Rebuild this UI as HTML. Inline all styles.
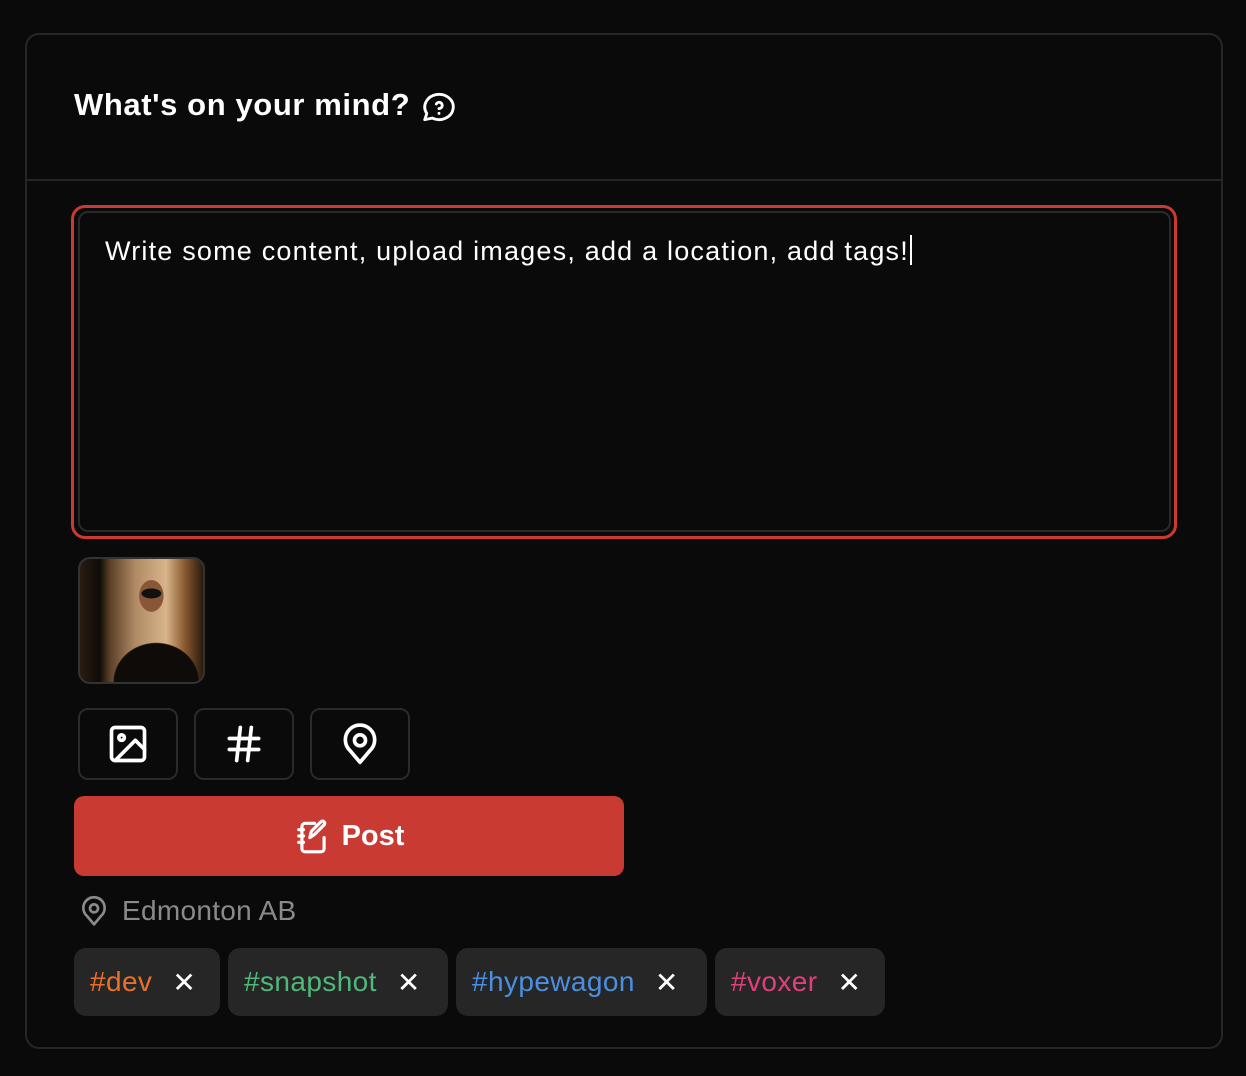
<!DOCTYPE html>
<html><head><meta charset="utf-8"><style>
*{box-sizing:border-box;margin:0;padding:0}
body{width:1246px;height:1076px;background:#0a0a0a;font-family:"Liberation Sans",sans-serif;color:#fff;position:relative;overflow:hidden}
.card{position:absolute;left:25px;top:33px;width:1198px;height:1016px;border:2px solid #262626;border-radius:14px}
.hdr{position:absolute;left:0;top:0;right:0;height:146px;border-bottom:2px solid #262626}
.title{font-size:31px;font-weight:bold;letter-spacing:0.6px}
.ring{position:absolute;left:71px;top:205px;width:1106px;height:334px;border:3px solid #c93a32;border-radius:14px}
.ta{position:absolute;left:78px;top:211px;width:1093px;height:321px;border:2px solid #2a2a2a;border-radius:10px}
.ta span{position:absolute;left:25px;top:22px;font-size:27px;color:#fff;letter-spacing:1.2px;white-space:nowrap}
.cursor{display:inline-block;width:2px;height:30px;background:#fff;vertical-align:-5px;margin-left:1px}
.photo{position:absolute;left:78px;top:557px;width:127px;height:127px;border-radius:12px;border:2px solid #333;overflow:hidden;
background:radial-gradient(ellipse 16px 8px at 58% 28%,#111 60%,transparent 64%),
radial-gradient(ellipse 20px 26px at 58% 30%,#8a5638 60%,transparent 62%),
radial-gradient(ellipse 60px 55px at 62% 100%,#0e0b09 70%,transparent 72%),
linear-gradient(90deg,#2a1c12 0%,#0f0b08 16%,#5a3e26 24%,#b08a64 45%,#d8b48a 70%,#8a5a30 85%,#2a1a0e 100%)}
.btn{position:absolute;top:708px;width:100px;height:72px;border:2px solid #2a2a2a;border-radius:10px;display:flex;align-items:center;justify-content:center}
.post{position:absolute;left:74px;top:796px;width:550px;height:80px;background:#c93a32;border-radius:10px;display:flex;align-items:center;justify-content:center;font-size:29px;font-weight:bold;gap:10px}
.loc{position:absolute;left:78px;top:893px;display:flex;align-items:center;gap:12px;color:#8a8a8a;font-size:28px;letter-spacing:0.3px}
.tag{position:absolute;top:948px;height:68px;background:#262626;border-radius:12px;display:flex;align-items:center;padding-left:16px;font-size:28px;letter-spacing:0.4px}
.tag b{font-weight:normal;color:#fff;margin-left:20px;font-size:28px}
</style></head><body>
<div class="card"><div class="hdr"></div></div>
<div class="title" style="position:absolute;left:74px;top:87px">What's on your mind?</div>
<svg style="position:absolute;left:420px;top:88px" width="38" height="38" viewBox="0 0 24 24" fill="none" stroke="#fff" stroke-width="1.8" stroke-linecap="round" stroke-linejoin="round"><path d="M3 20l1.3-3.9A9 8 0 1 1 7.7 19L3 20"/><path d="M12 16v.01"/><path d="M12 13a2 2 0 0 0 .9-3.8 2 2 0 0 0-2.6.9"/></svg>
<div class="ring"></div>
<div class="ta"><span>Write some content, upload images, add a location, add tags!<i class="cursor"></i></span></div>
<div class="photo"></div>
<div class="btn" style="left:78px"><svg width="44" height="44" viewBox="0 0 24 24" fill="none" stroke="#fff" stroke-width="2" stroke-linecap="round" stroke-linejoin="round"><rect x="3" y="3" width="18" height="18" rx="2"/><circle cx="8.5" cy="8.5" r="1.5"/><path d="M21 15l-5-5L5 21"/></svg></div>
<div class="btn" style="left:194px"><svg width="44" height="44" viewBox="0 0 24 24" fill="none" stroke="#fff" stroke-width="2" stroke-linecap="round"><path d="M4 9h16M4 15h16M10 3L8 21M16 3l-2 18"/></svg></div>
<div class="btn" style="left:310px"><svg width="44" height="44" viewBox="0 0 24 24" fill="none" stroke="#fff" stroke-width="2" stroke-linecap="round" stroke-linejoin="round"><circle cx="12" cy="10" r="3"/><path d="M12 22l-5.5-6.5A8 8 0 1 1 17.5 15.5z"/></svg></div>
<div class="post"><svg width="38" height="40" viewBox="0 0 24 24" fill="none" stroke="#fff" stroke-width="2" stroke-linecap="round" stroke-linejoin="round"><path d="M13 4H7a2 2 0 0 0-2 2v14a2 2 0 0 0 2 2h10a2 2 0 0 0 2-2v-7"/><path d="M10 13l1-4 6-6a1.4 1.4 0 0 1 2 2l-6 6z"/><path d="M3 8h3M3 12h3M3 16h3"/></svg>Post</div>
<div class="loc"><svg width="32" height="36" viewBox="0 0 24 24" fill="none" stroke="#8a8a8a" stroke-width="2" stroke-linecap="round" stroke-linejoin="round"><circle cx="12" cy="10" r="3"/><path d="M12 22l-5.5-6.5A8 8 0 1 1 17.5 15.5z"/></svg>Edmonton AB</div>
<div class="tag" style="left:74px;width:146px;color:#e8702a">#dev<b>✕</b></div>
<div class="tag" style="left:228px;width:220px;color:#4fb97a">#snapshot<b>✕</b></div>
<div class="tag" style="left:456px;width:251px;color:#4a90e2">#hypewagon<b>✕</b></div>
<div class="tag" style="left:715px;width:170px;color:#e0407a">#voxer<b>✕</b></div>
</body></html>
